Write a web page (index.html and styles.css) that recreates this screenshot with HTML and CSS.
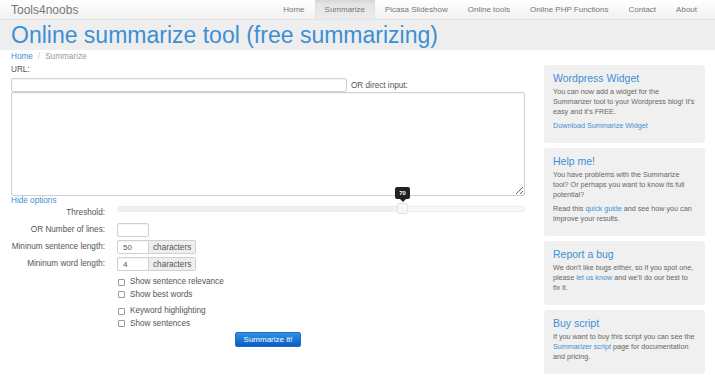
FILE: index.html
```html
<!DOCTYPE html>
<html lang="en">
<head>
  <meta charset="UTF-8" />
  <title>Online summarize tool (free summarizing)</title>
  <link rel="stylesheet" href="styles.css">
</head>
<body>

<!-- NAVBAR -->
<nav class="navbar">
  <a class="brand" href="#">Tools4noobs</a>
  <ul class="nav">
    <li><a href="#">Home</a></li>
    <li class="active"><a href="#">Summarize</a></li>
    <li><a href="#">Picasa Slideshow</a></li>
    <li><a href="#">Online tools</a></li>
    <li><a href="#">Online PHP Functions</a></li>
    <li><a href="#">Contact</a></li>
    <li><a href="#">About</a></li>
  </ul>
</nav>

<!-- HEADER -->
<header class="jumbotron">
  <h1>Online summarize tool (free summarizing)</h1>
</header>

<div class="container">
  <ol class="breadcrumb">
    <li><a href="#">Home</a></li>
    <li class="current">Summarize</li>
  </ol>

  <div class="row">
    <!-- MAIN FORM -->
    <main class="main">
      <label class="url-label">URL:</label>
      <div class="url-row">
        <input type="text" class="form-control url-input">
        <span class="or-text">OR direct input:</span>
      </div>
      <textarea class="form-control text-input"></textarea>
      <a class="toggle-link" href="#">Hide options</a>

      <div class="options">
        <label class="opt-label">Threshold:</label>
        <div class="slider">
          <div class="slider-track">
            <div class="slider-selection"></div>
          </div>
          <div class="slider-handle"></div>
          <div class="slider-tooltip">70</div>
        </div>

        <label class="opt-label">OR Number of lines:</label>
        <div><input type="text" class="form-control small-input"></div>

        <label class="opt-label">Mininum sentence length:</label>
        <div class="input-group">
          <input type="text" class="form-control small-input" value="50">
          <span class="addon">characters</span>
        </div>

        <label class="opt-label">Mininum word length:</label>
        <div class="input-group">
          <input type="text" class="form-control small-input" value="4">
          <span class="addon">characters</span>
        </div>

        <span></span>
        <div class="checks first">
          <label class="check"><input type="checkbox"> Show sentence relevance</label>
          <label class="check"><input type="checkbox"> Show best words</label>
        </div>

        <span></span>
        <div class="checks">
          <label class="check"><input type="checkbox"> Keyword highlighting</label>
          <label class="check"><input type="checkbox"> Show sentences</label>
        </div>
      </div>

      <div class="submit-row">
        <button class="btn-primary">Summarize it!</button>
      </div>
    </main>

    <!-- SIDEBAR -->
    <aside class="sidebar">
      <div class="well">
        <h3>Wordpress Widget</h3>
        <p>You can now add a widget for the Summarizer tool to your Wordpress blog! It's easy and it's FREE.</p>
        <p><a href="#">Download Summarize Widget</a></p>
      </div>
      <div class="well">
        <h3>Help me!</h3>
        <p>You have problems with the Summarize tool? Or perhaps you want to know its full potential?</p>
        <p>Read this <a href="#">quick guide</a> and see how you can improve your results.</p>
      </div>
      <div class="well">
        <h3>Report a bug</h3>
        <p>We don't like bugs either, so if you spot one, please <a href="#">let us know</a> and we'll do our best to fix it.</p>
      </div>
      <div class="well">
        <h3>Buy script</h3>
        <p>If you want to buy this script you can see the <a href="#">Summarizer script</a> page for documentation and pricing.</p>
      </div>
    </aside>
  </div>
</div>

</body>
</html>
```

FILE: styles.css
```css
body {
  margin: 0;
  font-family: "Liberation Sans", Arial, sans-serif;
  font-size: 8.2px;
  color: #555;
  background: #fff;
}

a {
  color: #3d8fd5;
  text-decoration: none;
}

/* NAVBAR */
.navbar {
  display: flex;
  align-items: center;
  height: 20px;
  padding: 0 8px 0 11px;
  background: linear-gradient(#ffffff, #f1f1f1);
  border-bottom: 1px solid #e4e4e4;
  box-shadow: 0 1px 3px rgba(0, 0, 0, 0.06);
  box-sizing: border-box;
}

.brand {
  font-size: 12px;
  color: #777;
}

.nav {
  display: flex;
  list-style: none;
  margin: 0 0 0 auto;
  padding: 0;
  height: 100%;
}

.nav li {
  display: flex;
}

.nav a {
  display: flex;
  align-items: center;
  padding: 0 10px;
  color: #777;
  font-size: 8px;
}

.nav .active a {
  background: linear-gradient(#e2e2e2, #ececec);
  box-shadow: inset 0 2px 3px rgba(0, 0, 0, 0.06);
}

/* HEADER */
.jumbotron {
  background: #eeeeee;
  height: 30px;
  padding: 0 11px;
}

.jumbotron h1 {
  margin: 0;
  font-size: 23px;
  font-weight: normal;
  line-height: 30px;
  color: #3d8fd5;
}

/* CONTENT */
.container {
  padding: 0 10px 0 11px;
}

.breadcrumb {
  display: flex;
  list-style: none;
  margin: 0;
  padding: 2px 0 0;
  height: 12px;
  line-height: 10px;
  font-size: 8.2px;
}

.breadcrumb li + li::before {
  content: "/";
  color: #ccc;
  padding: 0 5px;
}

.breadcrumb .current {
  color: #999;
}

.row {
  display: flex;
  gap: 19px;
  margin-top: 1px;
}

.main {
  flex: 1;
}

.sidebar {
  width: 161px;
  display: flex;
  flex-direction: column;
  gap: 5px;
}

.url-label {
  display: block;
  line-height: 10px;
  height: 13px;
}

.form-control {
  border: 1px solid #d0d0d0;
  border-radius: 2px;
  background: #fff;
  box-shadow: inset 0 1px 1px rgba(0, 0, 0, 0.05);
  box-sizing: border-box;
  font-family: inherit;
  font-size: 8px;
  color: #555;
  padding: 0 5px;
  margin: 0;
  display: block;
}

.url-row {
  display: flex;
  align-items: center;
  gap: 4px;
}

.url-input {
  width: 336px;
  height: 14px;
}

.text-input {
  width: 514px;
  height: 104px;
  resize: vertical;
}

.toggle-link {
  display: block;
  line-height: 10px;
}

/* OPTIONS */
.options {
  display: grid;
  grid-template-columns: 94px 1fr;
  column-gap: 12px;
  row-gap: 3px;
  align-items: center;
}

.opt-label {
  text-align: right;
  line-height: 14px;
}

.slider {
  position: relative;
  height: 14px;
}

.slider-track {
  position: absolute;
  left: 0;
  right: 0;
  top: 0;
  height: 6px;
  background: #f8f8f8;
  border: 1px solid #ececec;
  border-radius: 3px;
  box-sizing: border-box;
  overflow: hidden;
}

.slider-selection {
  width: 70%;
  height: 100%;
  background: #f0f0f0;
}

.slider-handle {
  position: absolute;
  left: 280px;
  top: -3px;
  width: 11px;
  height: 11px;
  background: #f7f7f7;
  border: 1px solid #e2e2e2;
  border-radius: 2px;
  box-sizing: border-box;
}

.slider-tooltip {
  position: absolute;
  left: 278px;
  top: -19px;
  width: 15px;
  height: 12px;
  line-height: 12px;
  background: #222;
  color: #fff;
  font-size: 6px;
  font-weight: bold;
  text-align: center;
  border-radius: 2px;
}

.slider-tooltip::after {
  content: "";
  position: absolute;
  left: 5px;
  bottom: -3px;
  border: 3px solid transparent;
  border-bottom: 0;
  border-top-color: #222;
}

.small-input {
  width: 32px;
  height: 14px;
}

.input-group {
  display: flex;
}

.input-group .small-input {
  border-radius: 2px 0 0 2px;
}

.addon {
  height: 14px;
  line-height: 14px;
  padding: 0 4px;
  background: #eee;
  border: 1px solid #d0d0d0;
  border-left: 0;
  border-radius: 0 2px 2px 0;
  box-sizing: border-box;
  color: #555;
}

.checks {
  display: flex;
  flex-direction: column;
  padding-top: 1px;
}

.checks.first {
  padding-top: 2px;
}

.check {
  display: flex;
  align-items: center;
  gap: 5px;
  line-height: 12.5px;
}

.check input {
  appearance: none;
  width: 7px;
  height: 7px;
  margin: 0 0 0 1px;
  border: 1px solid #9a9a9a;
  border-radius: 1px;
  background: #fff;
  box-sizing: border-box;
}

.submit-row {
  display: flex;
  justify-content: center;
  margin-top: 2px;
}

.btn-primary {
  font-family: inherit;
  font-size: 8px;
  color: #fff;
  height: 15px;
  width: 66px;
  padding: 0;
  border: 1px solid #1f6fc6;
  border-radius: 2px;
  background: linear-gradient(#2d93e6, #0a5cc2);
  cursor: pointer;
}

/* SIDEBAR WELLS */
.well {
  background: #f0f0f0;
  border-radius: 3px;
  padding: 6px 9px 12px;
  color: #666;
  font-size: 7.2px;
  line-height: 10px;
}

.well h3 {
  margin: 0 0 2px;
  font-size: 10.5px;
  font-weight: normal;
  line-height: 14px;
  color: #3d8fd5;
}

.well p {
  margin: 0 0 4px;
}

.well p:last-child {
  margin-bottom: 0;
}
```
